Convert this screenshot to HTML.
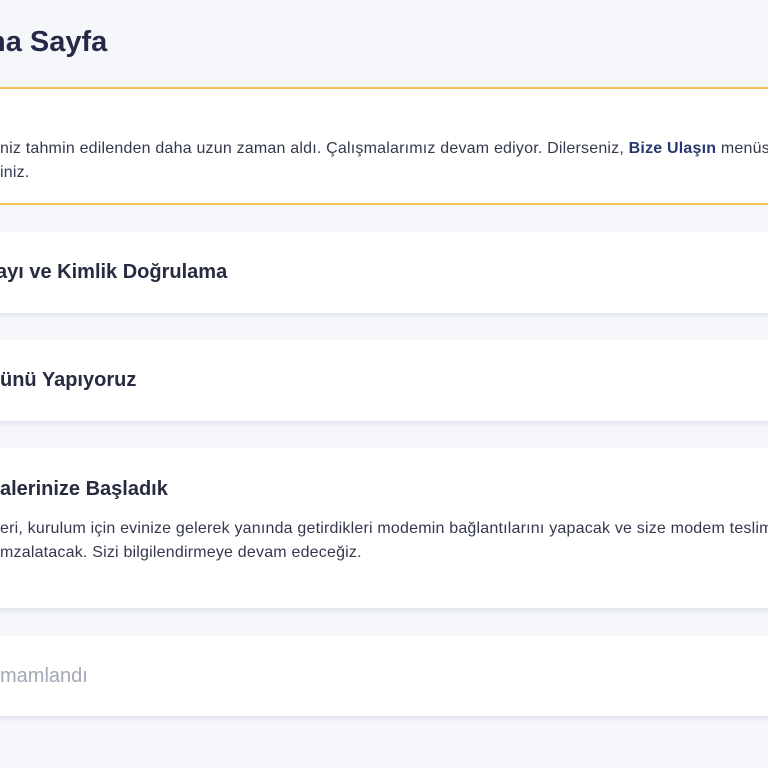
<!DOCTYPE html>
<html><head><meta charset="utf-8"><style>
body{margin:0;width:768px;height:768px;overflow:hidden;background:#f5f7fa;font-family:"Liberation Sans",sans-serif;color:#2a2f45;position:relative}
.a{position:absolute;white-space:nowrap}
.card{position:absolute;left:-10px;width:790px;background:#fff;box-shadow:0 3px 4px rgba(20,40,90,0.08)}
.h{font-size:20px;font-weight:bold;color:#262b40}
.t{font-size:16px;color:#33384d;letter-spacing:0.2px}
</style></head><body>
<div class="a" style="left:-12px;top:26px;font-size:29px;font-weight:bold;color:#252a48">na Sayfa</div>
<div class="a" style="left:-10px;top:87px;width:790px;height:114px;background:#fff;border-top:2px solid #f2c150;border-bottom:2px solid #f2c150"></div>
<div class="a t" style="left:0;top:140px">niz tahmin edilenden daha uzun zaman aldı. Çalışmalarımız devam ediyor. Dilerseniz, <b style="color:#25396e">Bize Ulaşın</b> menüsü</div>
<div class="a t" style="left:0;top:164px">iniz.</div>
<div class="card" style="top:232px;height:81px"></div>
<div class="a h" style="left:-4px;top:261px">ayı ve Kimlik Doğrulama</div>
<div class="card" style="top:340px;height:81px"></div>
<div class="a h" style="left:0;top:369px">ünü Yapıyoruz</div>
<div class="card" style="top:448px;height:160px"></div>
<div class="a h" style="left:0;top:478px">alerinize Başladık</div>
<div class="a t" style="left:0;top:520px">eri, kurulum için evinize gelerek yanında getirdikleri modemin bağlantılarını yapacak ve size modem teslim</div>
<div class="a t" style="left:0;top:544px">mzalatacak. Sizi bilgilendirmeye devam edeceğiz.</div>
<div class="card" style="top:636px;height:80px"></div>
<div class="a" style="left:0;top:665px;font-size:20px;color:#a3a8b8">mamlandı</div>
</body></html>
